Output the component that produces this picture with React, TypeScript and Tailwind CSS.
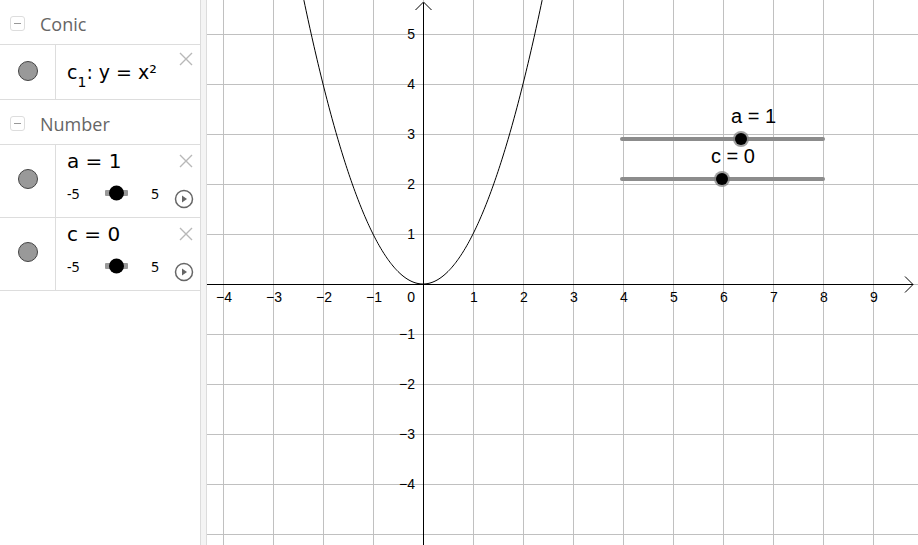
import React from "react";

const OX = 216;
const OY = 284;
const U = 50;

function parabola(): string {
  const pts: string[] = [];
  for (let i = 0; i <= 240; i++) {
    const x = -2.4 + (4.8 * i) / 240;
    const y = x * x;
    pts.push(`${(OX + x * U).toFixed(2)},${(OY - y * U).toFixed(2)}`);
  }
  return "M" + pts.join(" L");
}

function Graph() {
  const xs = [-4, -3, -2, -1, 0, 1, 2, 3, 4, 5, 6, 7, 8, 9];
  const ys = [-5, -4, -3, -2, -1, 0, 1, 2, 3, 4, 5];
  const yl = [-4, -3, -2, -1, 1, 2, 3, 4, 5];
  const lab = (n: number) => (n < 0 ? "\u2212" + Math.abs(n) : String(n));
  return (
    <svg width="711" height="545" viewBox="0 0 711 545" className="block">
      <g stroke="#c0c0c0" strokeWidth="1" shapeRendering="crispEdges">
        {xs.map((k) => (
          <line key={"gx" + k} x1={OX + k * U + 0.5} y1={0} x2={OX + k * U + 0.5} y2={545} />
        ))}
        {ys.map((k) => (
          <line key={"gy" + k} x1={0} y1={OY + k * U + 0.5} x2={711} y2={OY + k * U + 0.5} />
        ))}
      </g>
      <g stroke="#000" strokeWidth="1" fill="none">
        <line x1={0} y1={OY + 0.5} x2={706} y2={OY + 0.5} />
        <line x1={OX + 0.5} y1={3} x2={OX + 0.5} y2={545} />
        <path d={`M${698},${OY - 7.5} L${706},${OY + 0.5} L${698},${OY + 8.5}`} />
        <path d={`M${OX - 7.5},${10} L${OX + 0.5},${2} L${OX + 8.5},${10}`} />
      </g>
      <g fontFamily="'Liberation Sans', Arial, sans-serif" fontSize="14" fill="#000">
        {xs
          .filter((k) => k !== 0)
          .map((k) => (
            <text key={"lx" + k} x={OX + k * U + 1} y={302} textAnchor="middle">
              {lab(k)}
            </text>
          ))}
        <text x={OX - 8} y={302} textAnchor="end">0</text>
        {yl.map((k) => (
          <text key={"ly" + k} x={OX - 8} y={OY - k * U + 5} textAnchor="end">
            {lab(k)}
          </text>
        ))}
      </g>
      <path d={parabola()} stroke="#000" strokeWidth="1" fill="none" />
      <g>
        <line x1={415} y1={139} x2={616} y2={139} stroke="#8c8c8c" strokeWidth="4" strokeLinecap="round" />
        <circle cx={534} cy={139} r={8} fill="#7a7a7a" opacity="0.7" />
        <circle cx={534} cy={139} r={6} fill="#000" />
        <line x1={415} y1={179} x2={616} y2={179} stroke="#8c8c8c" strokeWidth="4" strokeLinecap="round" />
        <circle cx={515} cy={179} r={8} fill="#7a7a7a" opacity="0.7" />
        <circle cx={515} cy={179} r={6} fill="#000" />
        <g fontFamily="'Liberation Sans', Arial, sans-serif" fontSize="20" fill="#000">
          <text x={524} y={123}>a = 1</text>
          <text x={504} y={163}>c = 0</text>
        </g>
      </g>
    </svg>
  );
}

function CloseX() {
  return (
    <svg width="16" height="16" viewBox="0 0 16 16" className="block">
      <path d="M2 2 L14 14 M14 2 L2 14" stroke="#b8b8b8" strokeWidth="1.4" />
    </svg>
  );
}

function PlayBtn() {
  return (
    <svg width="20" height="20" viewBox="0 0 20 20" className="block">
      <circle cx="10" cy="10" r="8.5" stroke="#666" strokeWidth="1.5" fill="none" />
      <path d="M8 6.5 L13 10 L8 13.5 Z" fill="#666" />
    </svg>
  );
}

function Dot() {
  return <div className="w-[20px] h-[20px] rounded-full bg-[#999] border border-[#444]" />;
}

function Header({ title }: { title: string }) {
  return (
    <div className="h-[45px] flex items-center border-b border-[#ddd] pl-[10px] pt-[3px] shrink-0">
      <div className="w-[15px] h-[15px] border border-[#ddd] rounded-[3px] flex items-center justify-center">
        <div className="w-[7px] h-px bg-[#999]" />
      </div>
      <span className="ml-[15px] text-[18px] text-[#666] font-['Open_Sans',sans-serif] leading-none">{title}</span>
    </div>
  );
}

function SliderItem({ name, val, pos }: { name: string; val: string; pos: number }) {
  return (
    <div className="h-[73px] flex border-b border-[#ddd] shrink-0">
      <div className="w-[56px] shrink-0 border-r border-[#ddd] flex items-center justify-center pb-[4px]">
        <Dot />
      </div>
      <div className="flex-1 min-w-0 flex flex-col pl-[11px] pr-[6px] pt-[3px]">
        <div className="flex justify-between items-start h-[26px]">
          <span className="text-[20px] text-black font-['DejaVu_Sans',sans-serif] leading-[26px] whitespace-nowrap">
            {name} = {val}
          </span>
          <div className="mt-[5px]">
            <CloseX />
          </div>
        </div>
        <div className="flex items-center mt-[7px] h-[24px] font-['Noto_Sans',sans-serif] text-[14px] text-black">
          <span className="w-[28px]">-5</span>
          <div className="relative w-[23px] h-[6px] bg-[#999] rounded-[1px] ml-[13px] shrink-0">
            <div
              className="absolute top-1/2 -translate-y-1/2 w-[15px] h-[15px] rounded-full bg-black"
              style={{ left: pos - 7.5 }}
            />
          </div>
          <span className="ml-[23px]">5</span>
          <div className="ml-[15px] mt-[12px]">
            <PlayBtn />
          </div>
        </div>
      </div>
    </div>
  );
}

export default function App() {
  return (
    <div className="w-[918px] h-[545px] flex bg-white overflow-hidden">
      <div className="w-[200px] flex flex-col shrink-0">
        <Header title="Conic" />
        <div className="h-[55px] flex border-b border-[#ddd] shrink-0">
          <div className="w-[56px] shrink-0 border-r border-[#ddd] flex items-center justify-center pb-[3px]">
            <Dot />
          </div>
          <div className="flex-1 min-w-0 flex justify-between items-start pl-[11px] pr-[6px]">
            <span className="mt-[15px] text-[19px] text-black font-['DejaVu_Sans',sans-serif] leading-[24px] whitespace-nowrap">
              c<sub className="text-[14px] align-[-4px]">1</sub>: y = x²
            </span>
            <div className="mt-[6px]">
              <CloseX />
            </div>
          </div>
        </div>
        <Header title="Number" />
        <SliderItem name="a" val="1" pos={11.5} />
        <SliderItem name="c" val="0" pos={11.5} />
      </div>
      <div className="w-[7px] bg-[#f4f4f4] border-x border-[#dcdcdc] shrink-0" />
      <div className="flex-1">
        <Graph />
      </div>
    </div>
  );
}
